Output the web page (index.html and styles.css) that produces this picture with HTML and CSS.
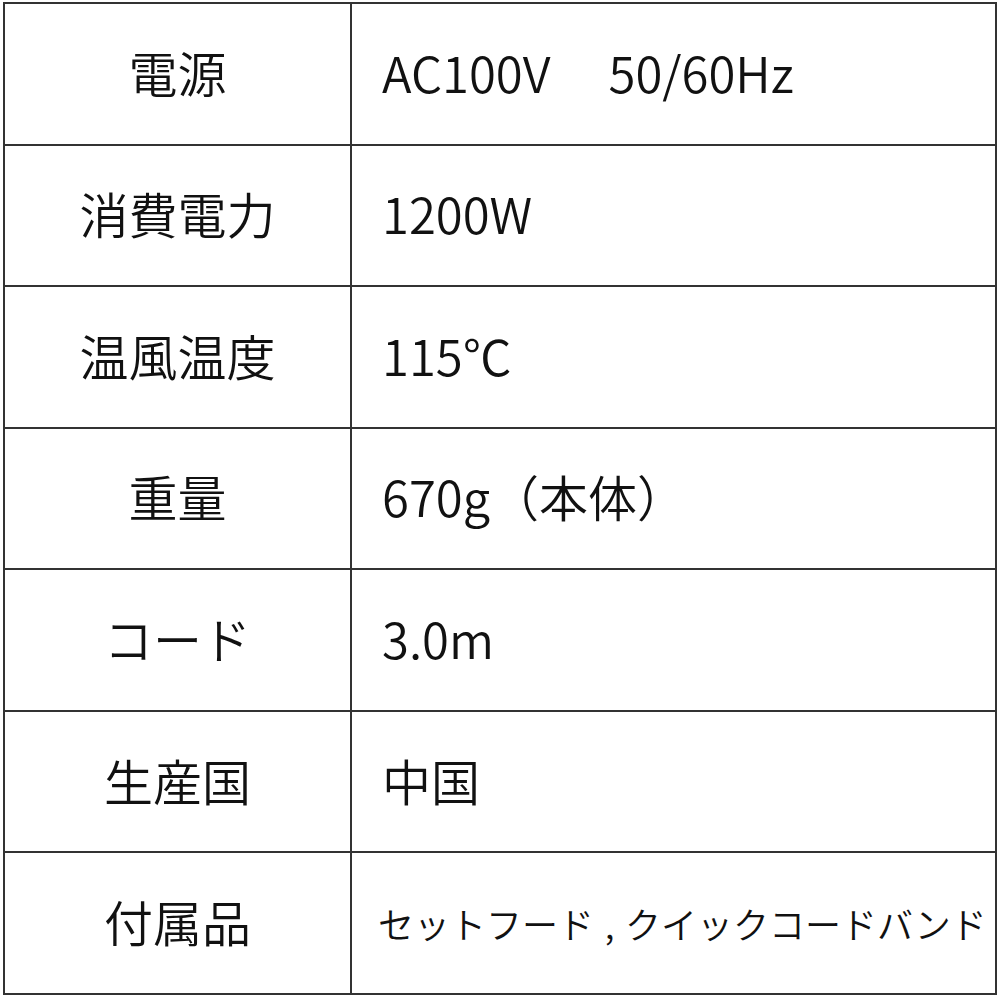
FILE: index.html
```html
<!DOCTYPE html>
<html lang="ja">
<head>
<meta charset="utf-8">
<link rel="stylesheet" href="styles.css">
</head>
<body>
<div class="spec">
  <div class="label">電源</div><div class="value">AC100V<span class="gap"></span>50/60Hz</div>
  <div class="label">消費電力</div><div class="value">1200W</div>
  <div class="label">温風温度</div><div class="value">115℃</div>
  <div class="label">重量</div><div class="value">670g（本体）</div>
  <div class="label">コード</div><div class="value">3.0m</div>
  <div class="label">生産国</div><div class="value">中国</div>
  <div class="label">付属品</div><div class="value small">セットフード<span class="comma">,</span>クイックコードバンド</div>
</div>
</body>
</html>
```
FILE: styles.css
```css
html, body {
  margin: 0;
  padding: 0;
  background: #fff;
}
body {
  font-family: "Noto Sans CJK JP", "Noto Sans", sans-serif;
  color: #111;
}
.spec {
  box-sizing: border-box;
  margin: 2px 0 0 3px;
  width: 994px;
  height: 993px;
  padding: 2px;
  background: #333;
  display: grid;
  grid-template-columns: 345px 1fr;
  grid-template-rows: repeat(7, 1fr);
  gap: 2px;
}
.label, .value {
  background: #fff;
  display: flex;
  align-items: center;
  font-size: 49px;
  font-weight: 350;
  line-height: 1;
  white-space: nowrap;
  padding-bottom: 5px;
  box-sizing: border-box;
}
.label {
  justify-content: center;
}
.value {
  padding-left: 30px;
}
.value.small {
  font-size: 36px;
  padding-left: 26px;
  padding-bottom: 0;
}
.gap {
  display: inline-block;
  width: 58px;
}
.comma {
  display: inline-block;
  width: 31px;
  text-align: center;
}
```
